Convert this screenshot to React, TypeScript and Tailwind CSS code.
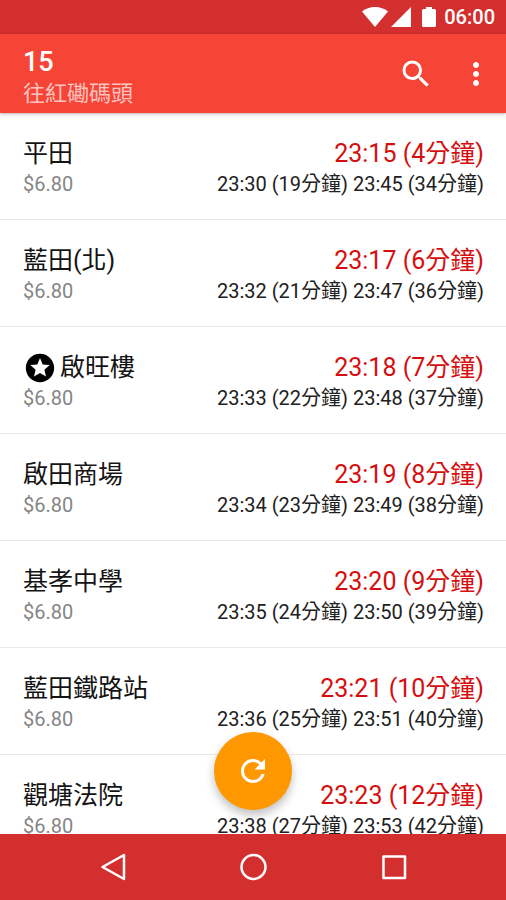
/**
 * RouteStops - live arrival times for every stop of a bus route
 */

import { MdMoreVert, MdRefresh, MdSearch, MdStars } from 'react-icons/md';

interface Stop {
  name: string;
  fare: string;
  next: string;
  later: string;
  starred?: boolean;
}

const stops: Stop[] = [
  { name: '平田', fare: '$6.80', next: '23:15 (4分鐘)', later: '23:30 (19分鐘) 23:45 (34分鐘)' },
  { name: '藍田(北)', fare: '$6.80', next: '23:17 (6分鐘)', later: '23:32 (21分鐘) 23:47 (36分鐘)' },
  { name: '啟旺樓', fare: '$6.80', next: '23:18 (7分鐘)', later: '23:33 (22分鐘) 23:48 (37分鐘)', starred: true },
  { name: '啟田商場', fare: '$6.80', next: '23:19 (8分鐘)', later: '23:34 (23分鐘) 23:49 (38分鐘)' },
  { name: '基孝中學', fare: '$6.80', next: '23:20 (9分鐘)', later: '23:35 (24分鐘) 23:50 (39分鐘)' },
  { name: '藍田鐵路站', fare: '$6.80', next: '23:21 (10分鐘)', later: '23:36 (25分鐘) 23:51 (40分鐘)' },
  { name: '觀塘法院', fare: '$6.80', next: '23:23 (12分鐘)', later: '23:38 (27分鐘) 23:53 (42分鐘)' },
];

const StatusBar = () => (
  <div className="flex h-[34px] shrink-0 items-center justify-end bg-[#d32f2f] pr-[11px] text-white">
    <svg className="h-5 w-[26px]" viewBox="0 0 26 20" fill="currentColor" aria-hidden="true">
      <path d="M13 20 0 4.400C3.500 1.600 8 0 13 0s9.500 1.600 13 4.400z" />
    </svg>
    <svg className="ml-[3px] size-5" viewBox="0 0 20 20" fill="currentColor" aria-hidden="true">
      <path d="M0 20 20 0v20z" />
    </svg>
    <svg className="ml-[11px] h-5 w-3.5" viewBox="0 0 14 20" fill="currentColor" aria-hidden="true">
      <path d="M4 2V0h6v2h2.500Q14 2 14 3.500v15q0 1.500-1.500 1.500h-11Q0 20 0 18.500v-15Q0 2 1.500 2z" />
    </svg>
    <span className="ml-2 text-xl font-medium">06:00</span>
  </div>
);

const AppBar = () => (
  <header className="z-10 flex h-[79px] shrink-0 items-center bg-[#f64436] pr-3 pl-[23px] text-white shadow-[0_1px_3px_rgba(0,0,0,0.3)]">
    <div className="min-w-0 flex-1 pt-2">
      <h1 className="text-[27px] leading-8 font-medium">15</h1>
      <p className="truncate text-[22px] leading-8 text-white/70">往紅磡碼頭</p>
    </div>
    <button type="button" aria-label="搜尋" className="mr-6">
      <MdSearch className="size-9" />
    </button>
    <button type="button" aria-label="更多選項">
      <MdMoreVert className="size-9" />
    </button>
  </header>
);

const StopRow = ({ name, fare, next, later, starred }: Stop) => (
  <li className="flex h-[107px] justify-between border-b border-[#e9e9e9] pt-[25px] pr-[22px] pl-[23px] whitespace-nowrap">
    <div>
      <h2 className="flex h-8 items-center text-[25px] leading-8 text-[#141414]">
        {starred && <MdStars className="mr-[3px] size-[34px] text-black" aria-label="已收藏" />}
        {name}
      </h2>
      <p className="text-xl leading-7 text-[#858585]">{fare}</p>
    </div>
    <div className="text-right">
      <p className="text-[25px] leading-8 text-[#d50f0f]">{next}</p>
      <p className="text-xl leading-7 text-[#212121]">{later}</p>
    </div>
  </li>
);

const NavBar = () => (
  <nav className="flex h-[66px] shrink-0 items-center justify-center gap-[105px] bg-[#d32f2f] text-white">
    <button type="button" aria-label="返回">
      <svg className="size-9" viewBox="0 0 36 36" fill="none" stroke="currentColor" strokeWidth={2.5} strokeLinejoin="round">
        <path d="M8.500 18 30 6v24z" />
      </svg>
    </button>
    <button type="button" aria-label="主畫面">
      <svg className="size-9" viewBox="0 0 36 36" fill="none" stroke="currentColor" strokeWidth={2.5}>
        <circle cx="18.500" cy="18" r="12" />
      </svg>
    </button>
    <button type="button" aria-label="最近使用">
      <svg className="size-9" viewBox="0 0 36 36" fill="none" stroke="currentColor" strokeWidth={2.5} strokeLinejoin="round">
        <rect x="7.500" y="7.500" width="21.500" height="21.500" />
      </svg>
    </button>
  </nav>
);

export default function App() {
  return (
    <div className="flex h-screen flex-col bg-white font-['Roboto','Noto_Sans_CJK_TC',sans-serif]">
      <StatusBar />
      <AppBar />
      <main className="relative min-h-0 flex-1 overflow-hidden">
        <ul>
          {stops.map((stop) => (
            <StopRow key={stop.name} {...stop} />
          ))}
        </ul>
        {/* Floating refresh button */}
        <button
          type="button"
          aria-label="重新整理"
          className="absolute bottom-6 left-1/2 flex size-[78px] -translate-x-1/2 items-center justify-center rounded-full bg-[#ff9800] text-white shadow-[0_5px_10px_rgba(0,0,0,0.25)]"
        >
          <MdRefresh className="size-9" />
        </button>
      </main>
      <NavBar />
    </div>
  );
}
